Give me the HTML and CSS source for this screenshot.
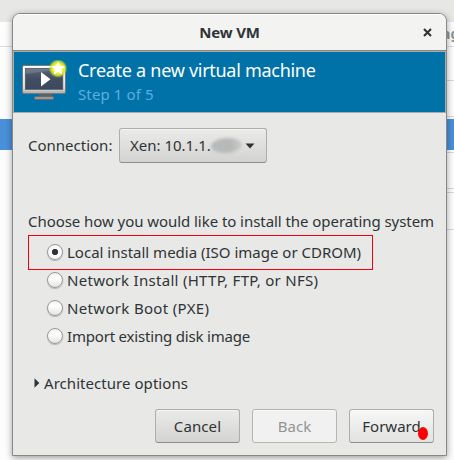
FILE: index.html
```html
<!DOCTYPE html>
<html lang="en">
<head>
<meta charset="utf-8">
<title>New VM</title>
<link rel="stylesheet" href="styles.css">
</head>
<body>
<div class="backdrop">
  <div class="toolbar"></div>
  <div class="head-row"><span>ag</span></div>
  <div class="row first"></div>
  <div class="row second"></div>
  <div class="row spacer"></div>
  <div class="row selected"></div>
  <div class="row last"></div>
  <div class="row gap"></div>
  <div class="row edge"></div>
  <div class="row graph"></div>
</div>
<main class="dialog">
  <header class="titlebar">
    <h1>New VM</h1>
    <svg class="close" width="9" height="9" viewBox="0 0 9 9"><path d="M1 1l7 7M8 1l-7 7" stroke="#2e3436" stroke-width="2.1"/></svg>
  </header>
  <section class="banner">
    <svg class="vm" width="48" height="44" viewBox="0 0 48 44">
      <defs>
        <linearGradient id="bezel" x2="0" y2="1"><stop stop-color="#fff"/><stop offset=".8" stop-color="#ddd"/><stop offset="1" stop-color="#aaa"/></linearGradient>
        <linearGradient id="screen" x2="0" y2="1"><stop stop-color="#5b6678"/><stop offset=".5" stop-color="#414d60"/><stop offset="1" stop-color="#3c485b"/></linearGradient>
        <radialGradient id="glow"><stop offset=".5" stop-color="#f5f531"/><stop offset=".75" stop-color="#d2e52b" stop-opacity=".85"/><stop offset="1" stop-color="#b8d82e" stop-opacity="0"/></radialGradient>
      </defs>
      <path d="M17 34h13v3H17z" fill="#5d6265"/>
      <rect x="12.500" y="36.500" width="19" height="3" rx="1" fill="#999" stroke="#686b6c"/>
      <rect x=".5" y="5.500" width="43" height="28" rx="1.500" fill="url(#bezel)" stroke="#777a7c"/>
      <rect x="3.300" y="8.300" width="37.500" height="21" fill="url(#screen)" stroke="#4b5260" stroke-width=".7"/>
      <path d="M4 9h36L4 14z" fill="#9aa1ad" opacity=".35"/>
      <path d="M19 12v14.500l9.500-7.250z" fill="#fff"/>
      <circle cx="36" cy="8.500" r="9.500" fill="url(#glow)"/>
      <path d="M36 1.500l2 4.200 4.800.6-3.500 3.300.9 4.800-4.200-2.300-4.200 2.300.9-4.800-3.500-3.300 4.800-.6z" fill="#fff"/>
    </svg>
    <div class="heading">
      <h2>Create a new virtual machine</h2>
      <p>Step 1 of 5</p>
    </div>
  </section>
  <section class="content">
    <div class="connection">
      <span class="label">Connection:</span>
      <div class="combo"><span class="host">Xen: 10.1.1.</span><i class="smudge"></i><svg width="10" height="6" viewBox="0 0 10 6"><path d="M.5 .5h9L5 5.500z" fill="#2e3436"/></svg></div>
    </div>
    <p class="choose">Choose how you would like to install the operating system</p>
    <div class="options">
      <div class="option marked"><i class="radio on"></i><span class="o1">Local install media (ISO image or CDROM)</span></div>
      <div class="option"><i class="radio"></i><span class="o2">Network Install (HTTP, FTP, or NFS)</span></div>
      <div class="option"><i class="radio"></i><span class="o3">Network Boot (PXE)</span></div>
      <div class="option"><i class="radio"></i><span class="o4">Import existing disk image</span></div>
    </div>
    <div class="expander"><svg width="6" height="10" viewBox="0 0 6 10"><path d="M.5 .3v9.400L5.300 5z" fill="#2e3436"/></svg><span>Architecture options</span></div>
    <footer>
      <div class="button cancel"><span>Cancel</span></div>
      <div class="button disabled"><span>Back</span></div>
      <div class="button forward"><span>Forward</span><i class="dot"></i></div>
    </footer>
  </section>
</main>
</body>
</html>
```
FILE: styles.css
```css
* { box-sizing: border-box; }
body { margin: 0; width: 454px; height: 460px; overflow: hidden; position: relative; color: #2e3436; font: 15px/20px "Noto Sans", sans-serif; background: #fdfdfd; }
h1, h2, p { margin: 0; font-weight: normal; }
.backdrop { height: 460px; overflow: hidden; }
.toolbar { height: 22px; background: #e7e7e5; }
.head-row { height: 25px; border-bottom: 1px solid #dcdcdc; padding-left: 442px; color: #929292; font-weight: bold; font-size: 14px; line-height: 24px; white-space: nowrap; overflow: hidden; }
.row { border-bottom: 1px solid #dcd8d8; margin-left: 440px; }
.first { height: 34px; }
.second { height: 36px; }
.spacer { height: 2px; border: 0; }
.selected { height: 31px; border: 0; margin-left: 0; background: #4a90d9; }
.last { height: 3px; }
.gap { height: 36px; }
.edge { height: 4px; }
.graph { height: 37px; }
.dialog { position: absolute; left: 12px; top: 13px; width: 435px; height: 443px; border: 1px solid #888986; border-radius: 8px 8px 0 0; background: #e8e8e6; box-shadow: 0 2px 7px rgba(0,0,0,.38); overflow: hidden; }
.titlebar { height: 37px; border-bottom: 1px solid #888986; background: #f3f3f2; box-shadow: inset 0 1px #fff; display: flex; align-items: center; justify-content: center; position: relative; }
h1 { font-weight: bold; font-size: 15px; line-height: 20px; letter-spacing: -.2px; }
.close { position: absolute; right: 14px; top: 14px; }
.banner { height: 62px; border: 1px solid #aaaca8; background: #0072a8; display: flex; padding: 8px 0 0 8px; color: #fff; }
.heading { margin-left: 8px; white-space: nowrap; }
h2 { font-size: 18px; line-height: 20px; letter-spacing: -.28px; }
.heading p { font-size: 15px; line-height: 20px; margin-top: 4px; color: #59afe3; letter-spacing: .12px; }
.content { padding: 14px 12px 0 15px; white-space: nowrap; }
.connection { display: flex; align-items: center; height: 35px; margin-top: 1px; }
.label { width: 91px; margin-top: -1px; }
.combo { width: 148px; height: 35px; display: flex; align-items: center; padding: 0 0 1px 10px; position: relative; }
.combo, .button { border: 1px solid #adaea9; border-bottom-color: #8e8f8b; border-radius: 3px; background: linear-gradient(#ebebe9, #d3d3d1); box-shadow: inset 0 1px rgba(255,255,255,.5); }
.combo svg { position: absolute; left: 125px; top: 14px; }
.smudge { position: absolute; left: 91px; top: 9px; width: 31px; height: 15px; border-radius: 50%; background: linear-gradient(90deg, #b7baba, #b7b9b9 65%, #cbcccb); filter: blur(1.5px); transform: rotate(-4deg); }
.choose { margin-top: 48px; letter-spacing: -.055px; }
.options { margin-top: 4px; }
.option { height: 28px; display: flex; align-items: center; padding-left: 19px; }
.marked { width: 345px; height: 35px; border: 1px solid #f00010; padding: 0 0 1px 18px; margin-bottom: -4px; }
.o2 { letter-spacing: .29px; }
.o3 { letter-spacing: .33px; }
.o4 { letter-spacing: -.19px; }
.radio { width: 16px; height: 16px; flex: none; border-radius: 50%; border: 1px solid #989a96; background: linear-gradient(#f0f0f0, #fff 35%, #e4e4e3); box-shadow: 0 1px 1px #b5b5b3; margin-right: 4px; }
.on { background: radial-gradient(circle, #2e3436 2.8px, #f8f8f8 3.5px); }
.expander { display: flex; align-items: center; margin: 23px 0 0 6px; letter-spacing: .05px; }
.expander span { margin-left: 4px; }
footer { display: flex; justify-content: flex-end; gap: 12px; margin-top: 16px; }
.button { width: 85px; height: 34px; display: flex; align-items: center; justify-content: center; padding-bottom: 1px; position: relative; }
.cancel { letter-spacing: .1px; }
.disabled { color: #919494; background: #f1f1f1; border-color: #b5b6b2; }
.forward { background: linear-gradient(#f7f7f7, #e2e2e0); }
.dot { position: absolute; left: 68px; top: 17px; width: 10px; height: 13px; border-radius: 50%; background: #f00; }
```
